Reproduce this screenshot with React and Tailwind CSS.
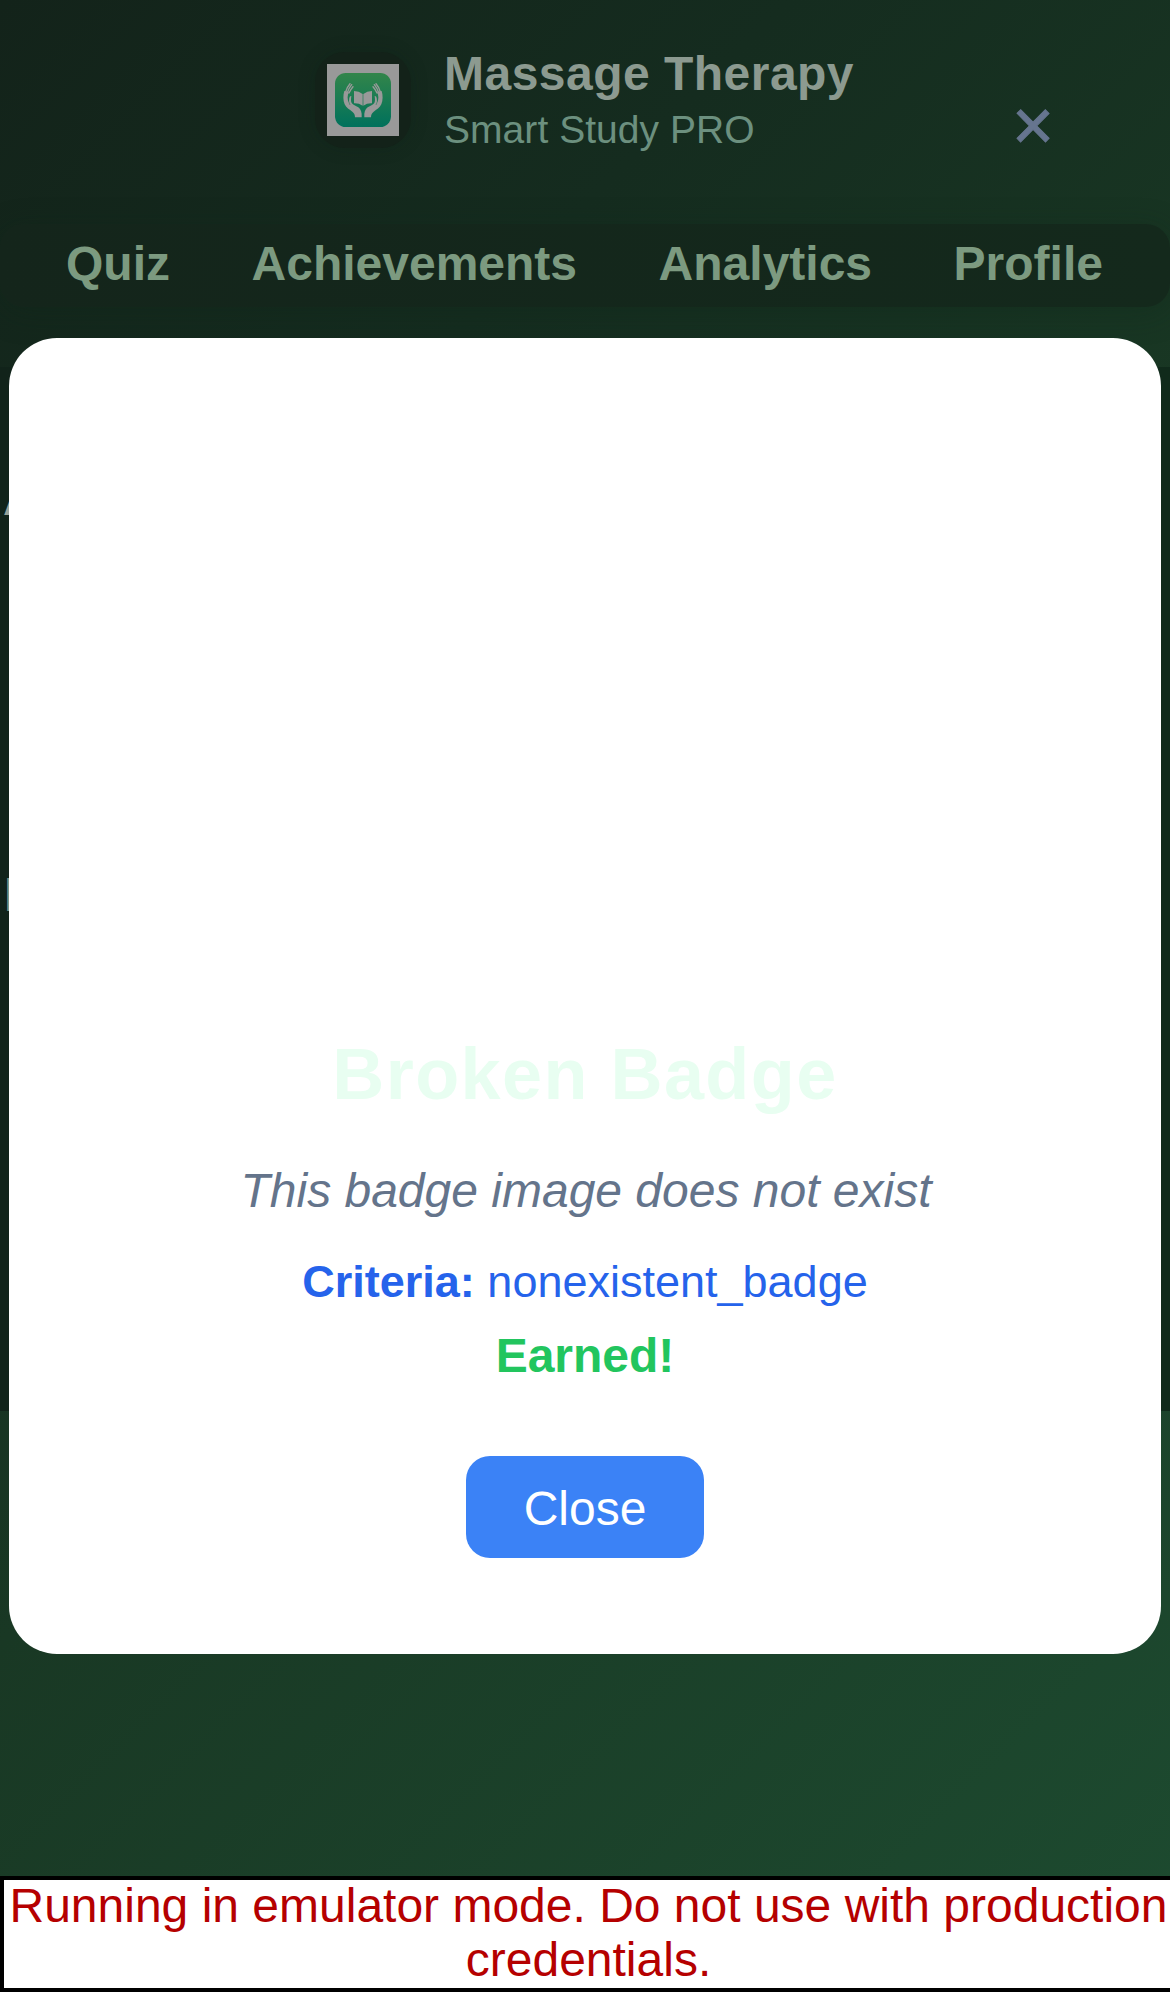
function Hand() {
  return (
    <g>
      <path
        fill="#999"
        d="M133 153C129 166 129 181 134 193C138 203 149 209 157 215C163 220 165 225 165 232H185C186 217 183 208 175 202C167 197 159 195 155 189C152 183 153 176 154 168C149 168 147 172 147 178L147 187C141 178 142 166 147 155Z"
      />
      <g stroke="#999" strokeWidth="4.2" strokeLinecap="round" fill="none">
        <path d="M136 158Q140 142 150 131" />
        <path d="M142 158Q146 145 155 134" />
        <path d="M147 159Q151 149 159 140" />
      </g>
      <path d="M147 171Q143 184 150 195" stroke="#17784f" strokeWidth="1.5" fill="none" />
      <path fill="#999" d="M162 153Q177 153 188 162V197Q176 189 162 190Z" />
    </g>
  );
}

function Logo() {
  return (
    <svg className="size-[72px]" viewBox="81 72 216 216" aria-hidden="true">
      <defs>
        <linearGradient id="tile" x1="0" y1="0" x2="0" y2="1">
          <stop offset="0" stopColor="#32854a" />
          <stop offset="1" stopColor="#00715c" />
        </linearGradient>
      </defs>
      <rect x="81" y="72" width="216" height="216" fill="#999" />
      <rect x="105" y="99" width="168" height="162" rx="32" fill="url(#tile)" />
      <Hand />
      <g transform="translate(378 0) scale(-1 1)">
        <Hand />
      </g>
    </svg>
  );
}

function Header() {
  return (
    <header className="flex h-[224px] items-start pl-[315px] pt-[52px]">
      <div className="flex size-24 shrink-0 items-center justify-center rounded-[30px] bg-[#132219] shadow-[0_0_18px_rgba(10,30,18,0.2)]">
        <Logo />
      </div>
      <div className="-mt-[5px] ml-[33px] whitespace-nowrap">
        <h1 className="text-[48px] font-bold leading-[54px] tracking-[0.01em] text-[#8c9a90]">Massage Therapy</h1>
        <p className="mt-[6px] text-[39px] leading-[46px] tracking-[0.05px] text-[#6c907f]">Smart Study PRO</p>
      </div>
    </header>
  );
}

function Nav() {
  return (
    <nav className="flex h-[83px] items-start justify-between rounded-[24px] bg-linear-to-r from-[#14251b] to-[#14291c] pl-[66px] pr-[67px] pt-[13px] text-[48px] font-bold leading-[54px] text-[#7c9a80] shadow-[0_6px_30px_rgba(15,40,26,0.35)]">
      <a>Quiz</a>
      <a>Achievements</a>
      <a>Analytics</a>
      <a>Profile</a>
    </nav>
  );
}

function BadgeModal() {
  return (
    <section className="absolute left-[9px] top-[338px] flex h-[1316px] w-[1152px] flex-col items-center rounded-[48px] bg-white pt-[695px]">
      <h2 className="text-[72px] font-bold leading-[83px] tracking-[0.02em] text-[#e8fef1]">Broken Badge</h2>
      <p className="mt-[48px] pl-[2px] text-[48px] italic leading-[54px] text-[#64748b]">This badge image does not exist</p>
      <p className="mt-[38px] text-[45px] leading-[52px] text-[#2563eb]">
        <strong className="font-bold">Criteria:</strong> nonexistent_badge
      </p>
      <p className="mt-[21px] text-[48px] font-bold leading-[54px] text-[#22c55e]">Earned!</p>
      <button className="mt-[73px] h-[102px] w-[238px] rounded-[24px] bg-[#3b82f6] pt-[4px] text-[48px] leading-[54px] text-white">
        Close
      </button>
    </section>
  );
}

export default function App() {
  return (
    <div className="relative flex h-[1992px] w-[1170px] flex-col overflow-hidden bg-[linear-gradient(135deg,#13231a_0%,#152c1f_25%,#193824_52%,#1d4b30_100%)] font-['Liberation_Sans',Arial,sans-serif]">
      <Header />
      <Nav />
      <main className="mt-[60px] h-[1044px] bg-linear-to-r from-[#11231a] to-[#102a1b] pl-[3px] text-[48px] font-bold leading-[54px]">
        <p className="pt-[105px] text-[#97a39b]">A</p>
        <p className="pl-px pt-[342px] text-[#7c9587]">E</p>
      </main>
      <BadgeModal />
      <button
        aria-label="Close badge"
        className="absolute left-[1012px] top-[84px] text-[72px] leading-[83px] text-[#66758f] [-webkit-text-stroke:1px_#66758f]"
      >
        ×
      </button>
      <footer className="mt-auto h-[116px] w-[1177px] shrink-0 border-4 border-black bg-white text-center text-[48px] leading-[54px] text-[#b50000]">
        <p className="-mt-px">Running in emulator mode. Do not use with production credentials.</p>
      </footer>
    </div>
  );
}
